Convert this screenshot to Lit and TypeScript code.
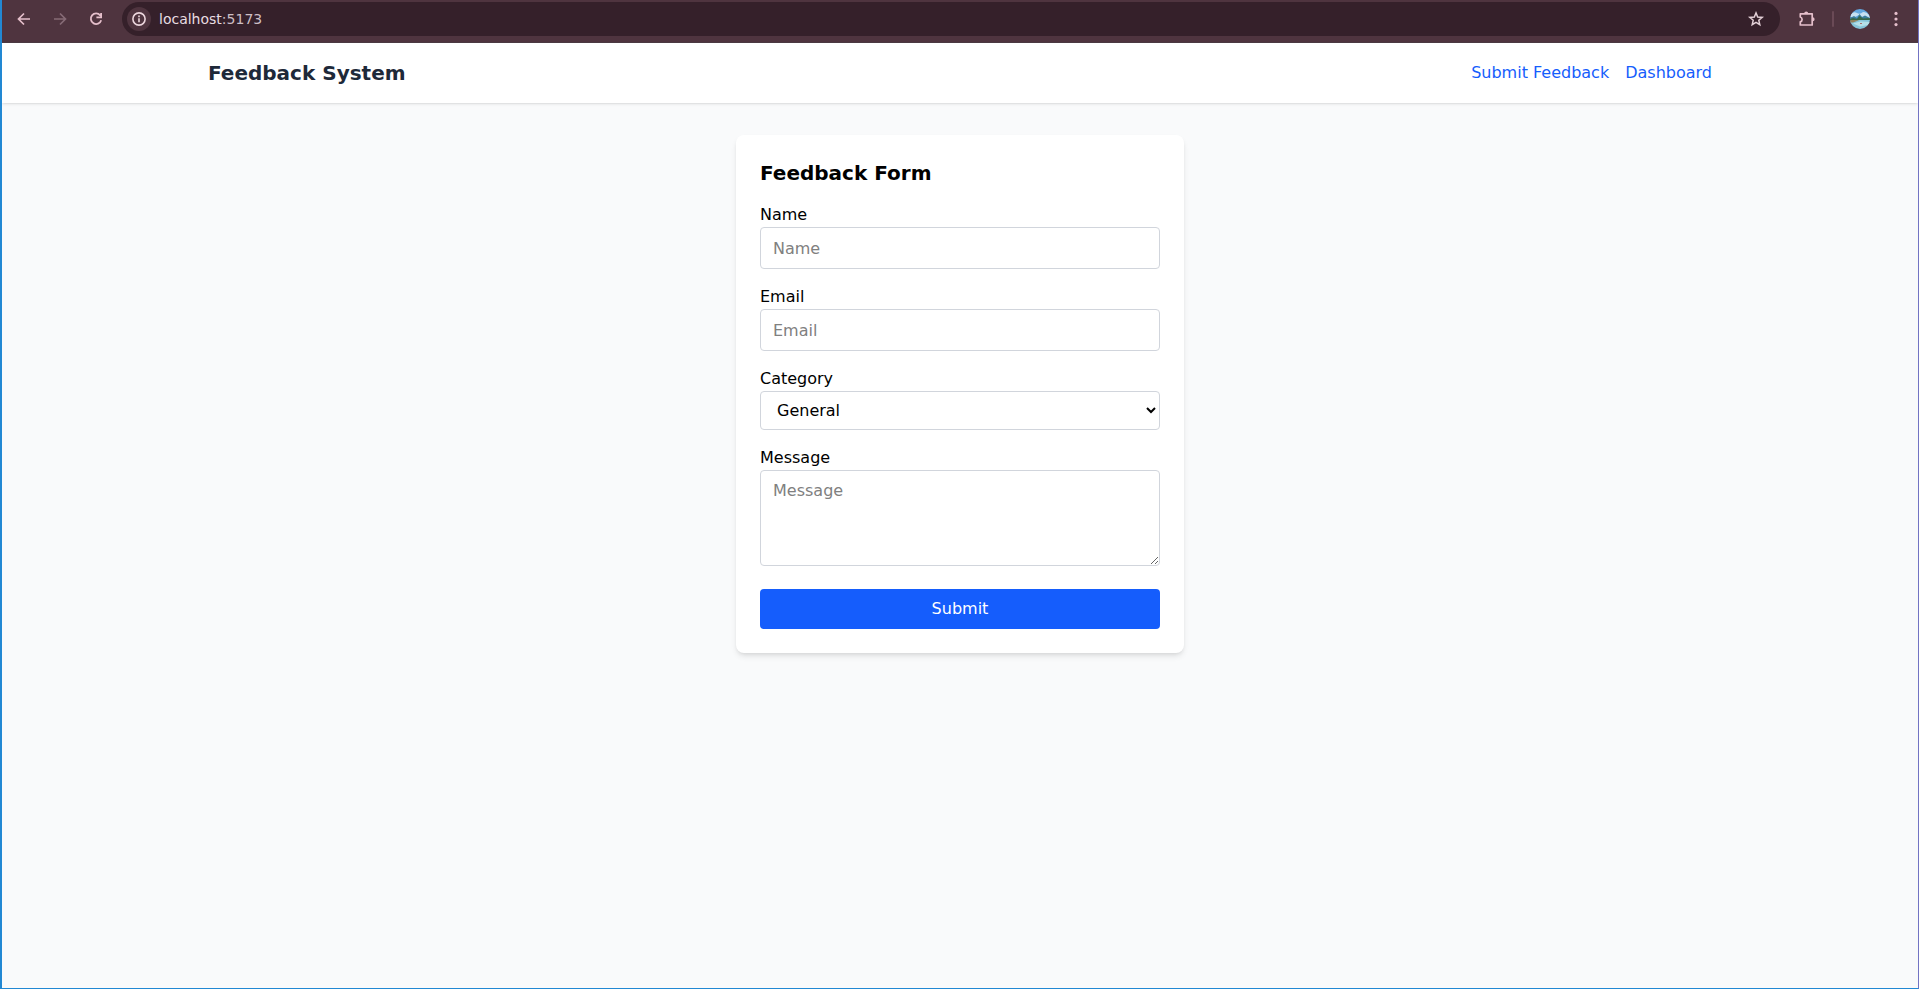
import { LitElement, html, css } from "lit";
import { customElement } from "lit/decorators.js";

@customElement("browser-bar")
class BrowserBar extends LitElement {
  static styles = css`
    :host { display: block; }
    .bar { box-sizing: border-box; height: 43px; padding: 2px 13px 7px 13px; display: flex; align-items: center; background: #4f343f; box-shadow: inset 0 -1px #4d3a44; color: #e5bfcb; }
    svg { display: block; flex: none; }
    .nav { display: flex; gap: 18px; }
    .nav svg, .tool { width: 18px; height: 18px; }
    .off { color: #866b76; }
    .address { flex: 1; height: 34px; margin-left: 17px; border-radius: 17px; background: #35202a; display: flex; align-items: center; box-sizing: border-box; padding: 0 15px 0 5px; }
    .info { width: 24px; height: 24px; border-radius: 50%; background: #4f343f; display: flex; align-items: center; justify-content: center; color: #ecd6dd; }
    .url { flex: 1; margin-left: 8px; font: 14px/20px "DejaVu Sans", sans-serif; color: #cdbec4; }
    .host { color: #e8dde1; }
    .star { color: #e3d0d7; }
    .tool { margin-left: 18px; }
    .sep { width: 2px; height: 16px; background: #6a4a56; margin: 0 16px; border-radius: 1px; }
    .dots { margin-left: 17px; }
  `;
  render() {
    return html`<div class="bar">
      <div class="nav">
        <svg viewBox="0 0 18 18" fill="none" stroke="currentColor" stroke-width="1.7"><path d="M15 9H4M9 3.5 3.5 9 9 14.5" /></svg>
        <svg class="off" viewBox="0 0 18 18" fill="none" stroke="currentColor" stroke-width="1.7"><path d="M3 9H14M9 3.5 14.5 9 9 14.5" /></svg>
        <svg viewBox="0 0 18 18" fill="none" stroke="currentColor" stroke-width="1.8"><path d="M13.2 5.3A5.3 5.3 0 1 0 14.2 10.3M14.1 3V7.4H9.4" /></svg>
      </div>
      <div class="address">
        <span class="info"><svg width="16" height="16" viewBox="0 0 16 16" fill="none" stroke="currentColor" stroke-width="1.6"><circle cx="8" cy="8" r="6.1" /><path d="M8 7.2V11.2M8 4.6V6.2" /></svg></span>
        <span class="url"><span class="host">localhost</span>:5173</span>
        <svg class="star" width="18" height="18" viewBox="0 0 18 18" fill="none" stroke="currentColor" stroke-width="1.5"><path d="M9 2.9 10.7 7 15.2 7.4 11.8 10.3 12.8 14.7 9 12.4 5.2 14.7 6.2 10.3 2.8 7.4 7.3 7Z" /></svg>
      </div>
      <svg class="tool" viewBox="0 0 18 18"><path d="M2.3 3.8H14.2V15H2.3V11.8A2.5 2.5 0 0 0 2.3 7Z" fill="none" stroke="currentColor" stroke-width="1.7" stroke-linejoin="round" /><path d="M6.2 3.4a2 2 0 0 1 4 0ZM14.6 7.3a2 2 0 0 1 0 4Z" fill="currentColor" /></svg>
      <span class="sep"></span>
      <svg width="20" height="20" viewBox="0 0 20 20">
        <defs><clipPath id="disc"><circle cx="10" cy="10" r="10" /></clipPath></defs>
        <g clip-path="url(#disc)">
          <path fill="#62a8e0" d="M0 0H20V12H0Z" />
          <path fill="#c6e0f2" d="M1 5Q4 2 7 4T13 3Q17 3 20 7V9H13L9 6 5 8H0Z" />
          <path fill="#3a7d9c" d="M0 9 4 7 7 9 9.5 5 12 8 15 6.5 20 9V12H0Z" />
          <path fill="#376748" d="M0 10 3 9 7 10 9.5 7 13 9.5 20 9V12H0Z" />
          <path fill="#86c5da" d="M0 12 9 11H20V20H0Z" />
          <path fill="#94805a" d="M0 11 9 11.2 3 13.4 0 13.5Z" />
          <path fill="#b4dfe8" d="M3 14.5 10 12.5 20 13 18 16 10 17.5Z" />
          <path fill="#a8706d" d="M10 14H12V15H10Z" />
        </g>
      </svg>
      <svg class="dots" width="18" height="18" viewBox="0 0 18 18" fill="currentColor"><circle cx="9" cy="3.4" r="1.6" /><circle cx="9" cy="9" r="1.6" /><circle cx="9" cy="14.6" r="1.6" /></svg>
    </div>`;
  }
}

@customElement("feedback-form")
class FeedbackForm extends LitElement {
  static styles = css`
    :host { display: block; width: 448px; margin: 32px auto 0; font: 16px/24px "DejaVu Sans", sans-serif; color: #000; }
    .card { background: #fff; border-radius: 8px; padding: 24px; box-shadow: 0 4px 6px -1px rgb(0 0 0 / .1), 0 2px 4px -2px rgb(0 0 0 / .1); }
    .title { font-size: 20px; line-height: 28px; font-weight: 700; margin: 0 0 16px; }
    .label { display: block; }
    .field { display: block; box-sizing: border-box; width: 100%; height: 42px; margin: 0 0 16px; padding: 8px 12px; border: 1px solid #d1d5dc; border-radius: 4px; background: #fff; font: inherit; color: #000; outline: none; }
    .field::placeholder { color: #808080; opacity: 1; }
    .select { height: 39px; }
    .area { height: 96px; margin-bottom: 23px; resize: vertical; }
    .submit { display: block; width: 100%; height: 40px; padding: 8px 16px; border: 0; border-radius: 4px; background: #155dfc; color: #fff; font: inherit; }
  `;
  render() {
    return html`<form class="card">
      <h2 class="title">Feedback Form</h2>
      <label class="label" for="name">Name</label>
      <input class="field" id="name" placeholder="Name" />
      <label class="label" for="email">Email</label>
      <input class="field" id="email" type="email" placeholder="Email" />
      <label class="label" for="category">Category</label>
      <select class="field select" id="category"><option>General</option></select>
      <label class="label" for="message">Message</label>
      <textarea class="field area" id="message" placeholder="Message"></textarea>
      <button class="submit" type="button">Submit</button>
    </form>`;
  }
}

@customElement("app-root")
class AppRoot extends LitElement {
  static styles = css`
    :host { display: block; height: 100vh; }
    .window { box-sizing: border-box; height: 100%; overflow: hidden; border: solid #2288d3; border-width: 0 1px 1px 2px; border-right-color: #7373c3; background: #f9fafb; }
    .header { background: #fff; box-shadow: 0 1px 3px rgb(0 0 0 / .1), 0 1px 2px -1px rgb(0 0 0 / .1); }
    .inner { box-sizing: border-box; max-width: 1536px; margin: 0 auto; padding: 16px; display: flex; justify-content: space-between; align-items: center; font: 16px/24px "DejaVu Sans", sans-serif; }
    .brand { margin: 0; font-size: 20px; line-height: 28px; font-weight: 700; color: #1e2939; }
    .links { display: flex; gap: 16px; }
    .link { color: #155dfc; text-decoration: none; }
  `;
  render() {
    return html`<div class="window">
      <browser-bar></browser-bar>
      <header class="header"><div class="inner">
        <h1 class="brand">Feedback System</h1>
        <nav class="links"><a class="link" href="#">Submit Feedback</a><a class="link" href="#">Dashboard</a></nav>
      </div></header>
      <feedback-form></feedback-form>
    </div>`;
  }
}
